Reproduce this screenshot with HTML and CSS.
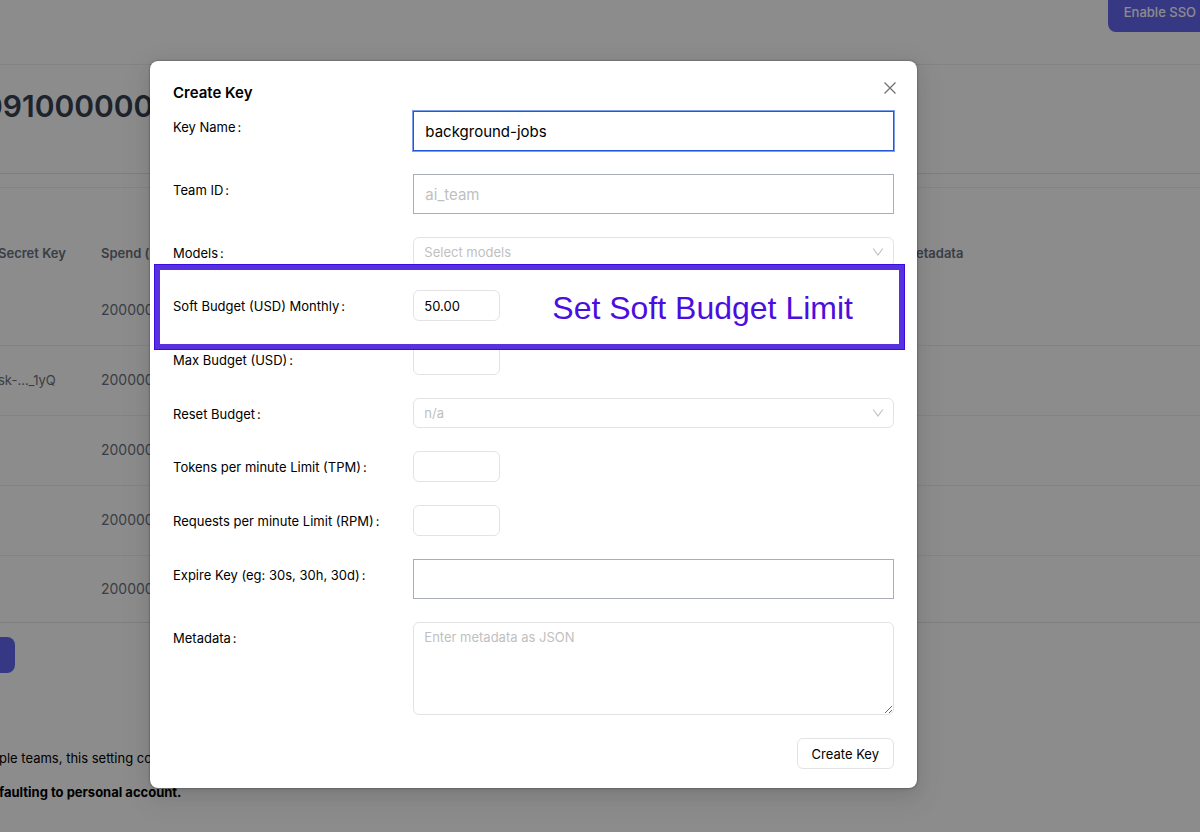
FILE: index.html
```html
<!DOCTYPE html>
<html lang="en">
<head>
<meta charset="utf-8">
<title>Create Key</title>
<link rel="stylesheet" href="styles.css">
</head>
<body>
<div class="page">
  <header class="topbar"><button class="primary sso" type="button">Enable SSO</button></header>
  <section class="total"><p class="total-value">091000000</p></section>
  <section class="keys">
    <table class="key-table">
      <colgroup><col class="col-secret"><col class="col-spend"><col></colgroup>
      <thead><tr><th>Secret Key</th><th>Spend (</th><th>Metadata</th></tr></thead>
      <tbody>
        <tr><td></td><td>200000</td><td></td></tr>
        <tr><td>sk-..._1yQ</td><td>200000</td><td></td></tr>
        <tr><td></td><td>200000</td><td></td></tr>
        <tr><td></td><td>200000</td><td></td></tr>
        <tr><td></td><td>200000</td><td></td></tr>
      </tbody>
    </table>
  </section>
  <button class="primary create" type="button" aria-label="Create new key"></button>
  <p class="note">ple teams, this setting co</p>
  <p class="note strong">faulting to personal account.</p>
</div>

<div class="scrim">
  <div class="modal" role="dialog" aria-labelledby="modal-title">
    <button class="close" type="button" aria-label="Close">
      <svg viewBox="0 0 14 14" width="14" height="14"><path d="M1.500 1.500 12.500 12.500M12.500 1.500 1.500 12.500" fill="none" stroke="currentColor" stroke-width="1.300"/></svg>
    </button>
    <h2 class="title" id="modal-title">Create Key</h2>
    <form class="form">
      <div class="row">
        <label class="label" for="name">Key Name<span class="colon">:</span></label>
        <input class="text active" id="name" type="text" value="background-jobs">
      </div>
      <div class="row">
        <label class="label" for="team">Team ID<span class="colon">:</span></label>
        <input class="text" id="team" type="text" placeholder="ai_team">
      </div>
      <div class="row">
        <label class="label" for="models">Models<span class="colon">:</span></label>
        <div class="select-wrap">
          <select class="select" id="models"><option>Select models</option></select>
          <svg class="chevron" viewBox="0 0 12 12" width="12" height="12"><path d="M1.200 2.500 6 9 10.800 2.500" fill="none" stroke="currentColor" stroke-width="1.100"/></svg>
        </div>
      </div>
      <div class="row highlighted">
        <label class="label" for="soft">Soft Budget (USD) Monthly<span class="colon">:</span></label>
        <div class="callout-line">
          <input class="number" id="soft" type="text" inputmode="decimal" value="50.00">
          <span class="callout">Set Soft Budget Limit</span>
        </div>
      </div>
      <div class="row">
        <label class="label" for="max">Max Budget (USD)<span class="colon">:</span></label>
        <input class="number" id="max" type="text" inputmode="decimal">
      </div>
      <div class="row">
        <label class="label" for="reset">Reset Budget<span class="colon">:</span></label>
        <div class="select-wrap">
          <select class="select" id="reset"><option>n/a</option></select>
          <svg class="chevron" viewBox="0 0 12 12" width="12" height="12"><path d="M1.200 2.500 6 9 10.800 2.500" fill="none" stroke="currentColor" stroke-width="1.100"/></svg>
        </div>
      </div>
      <div class="row">
        <label class="label" for="tpm">Tokens per minute Limit (TPM)<span class="colon">:</span></label>
        <input class="number" id="tpm" type="text" inputmode="numeric">
      </div>
      <div class="row">
        <label class="label" for="rpm">Requests per minute Limit (RPM)<span class="colon">:</span></label>
        <input class="number" id="rpm" type="text" inputmode="numeric">
      </div>
      <div class="row">
        <label class="label" for="expire">Expire Key (eg: 30s, 30h, 30d)<span class="colon">:</span></label>
        <input class="text" id="expire" type="text">
      </div>
      <div class="row">
        <label class="label" for="meta">Metadata<span class="colon">:</span></label>
        <textarea class="area" id="meta" placeholder="Enter metadata as JSON"></textarea>
      </div>
      <button class="submit" type="button">Create Key</button>
    </form>
  </div>
</div>
</body>
</html>
```
FILE: styles.css
```css
* { box-sizing: border-box; }

body {
  margin: 0;
  min-height: 100vh;
  overflow: hidden;
  background: #fff;
  color: #000;
  font: 13px/22px Inter, "Liberation Sans", sans-serif;
}

button, input, select, textarea { font: inherit; color: inherit; }
p, h2 { margin: 0; }

/* Page behind the dialog */
.page { overflow: hidden; }

.topbar {
  display: flex;
  justify-content: flex-end;
  align-items: flex-start;
  height: 65px;
  border-bottom: 1px solid #efefef;
}

.primary {
  height: 36px;
  border: 0;
  border-radius: 8px;
  background: #6366f1;
  color: #fff;
  font-weight: 500;
}

.sso {
  height: 40px;
  margin: -8px -12px 0 0;
  padding: 0 16px;
  font-size: 13px;
}

.total {
  height: 109px;
  padding-top: 23px;
  border-bottom: 1px solid #e5e5e5;
}

.total-value {
  margin-left: -17px;
  color: #374151;
  font-size: 30px;
  font-weight: 600;
  line-height: 36px;
}

.keys {
  margin-top: 13px;
  padding-top: 42px;
  border-top: 1px solid #efefef;
  border-bottom: 1px solid #e5e5e5;
}

.key-table {
  width: 100%;
  table-layout: fixed;
  border-collapse: collapse;
  color: #6b7280;
}

.col-secret { width: 101px; }
.col-spend { width: 803px; }
.key-table th, .key-table td { padding: 0; text-align: left; white-space: nowrap; }
.key-table th { height: 45px; color: #6b7280; font-weight: 600; }
.key-table td { height: 70px; font-size: 14px; }
.key-table tr > :first-child { font-size: 13px; text-indent: -2px; }
.key-table tbody tr + tr { border-top: 1px solid #efefef; }
.key-table tbody tr:last-child td { height: 67px; }

.create { display: block; width: 31px; margin: 14px 0 74px -16px; }
.note { margin: 0 0 12px -1px; }
.note.strong { font-weight: 700; }

/* Dialog */
.scrim {
  position: absolute;
  inset: 0;
  padding: 61px 283px 0 150px;
  background: rgba(0, 0, 0, 0.45);
}

.modal {
  position: relative;
  padding: 20px 23px 19px;
  border-radius: 8px;
  background: #fff;
  box-shadow: 0 6px 16px rgba(0, 0, 0, 0.08), 0 3px 6px -4px rgba(0, 0, 0, 0.12), 0 9px 28px 8px rgba(0, 0, 0, 0.05), 0 0 2px rgba(0, 0, 0, 0.5);
}

.close {
  position: absolute;
  top: 16px;
  right: 16px;
  display: grid;
  place-items: center;
  width: 22px;
  height: 22px;
  padding: 0;
  border: 0;
  background: none;
  color: #737373;
}

.title { margin-bottom: 6px; font-size: 15px; font-weight: 600; line-height: 24px; }
.form { display: flex; flex-direction: column; gap: 23px; }
.row { display: grid; grid-template-columns: 1fr 2fr; align-items: start; }
.label { line-height: 32px; height: 30px; font-size: 13px; }
.colon { margin-left: 2px; }

.text {
  width: 100%;
  height: 40px;
  padding: 0 11px;
  border: 1px solid #a9adb5;
  background: #fff;
  font-size: 15px;
}

.text.active { border-color: #2257d8; box-shadow: 0 0 0 1px #7d9cea; outline: 0; }
.text::placeholder, .area::placeholder { color: #bfbfbf; opacity: 1; }

.number {
  width: 87px;
  height: 31px;
  padding: 0 10px;
  border: 1px solid #e3e3e3;
  border-radius: 6px;
  background: #fff;
}

.select-wrap { position: relative; display: flex; }

.select {
  width: 100%;
  height: 30px;
  padding: 0 10px;
  appearance: none;
  border: 1px solid #e3e3e3;
  border-radius: 6px;
  background: #fff;
  color: #bfbfbf;
}

.chevron { position: absolute; top: 9px; right: 10px; color: #bfbfbf; }

.highlighted { position: relative; z-index: 1; }

.highlighted::before {
  content: "";
  position: absolute;
  z-index: -1;
  inset: -26px -11px -29px -19px;
  border: 6px solid #5731e0;
  outline: 1px solid #3d0be0;
  outline-offset: -1px;
  background: #fff;
}

.callout-line { display: flex; align-items: center; gap: 52px; height: 31px; }

.callout {
  padding-top: 4px;
  color: #4a0ee0;
  font: 32px/36px "Liberation Sans", Arial, sans-serif;
  white-space: nowrap;
}

.area {
  width: 100%;
  height: 93px;
  padding: 3px 10px;
  border: 1px solid #e3e3e3;
  border-radius: 6px;
  background: #fff;
  resize: vertical;
}

.submit {
  align-self: flex-end;
  height: 31px;
  padding: 0 14px;
  border: 1px solid #e3e3e3;
  border-radius: 6px;
  background: #fff;
}
```
